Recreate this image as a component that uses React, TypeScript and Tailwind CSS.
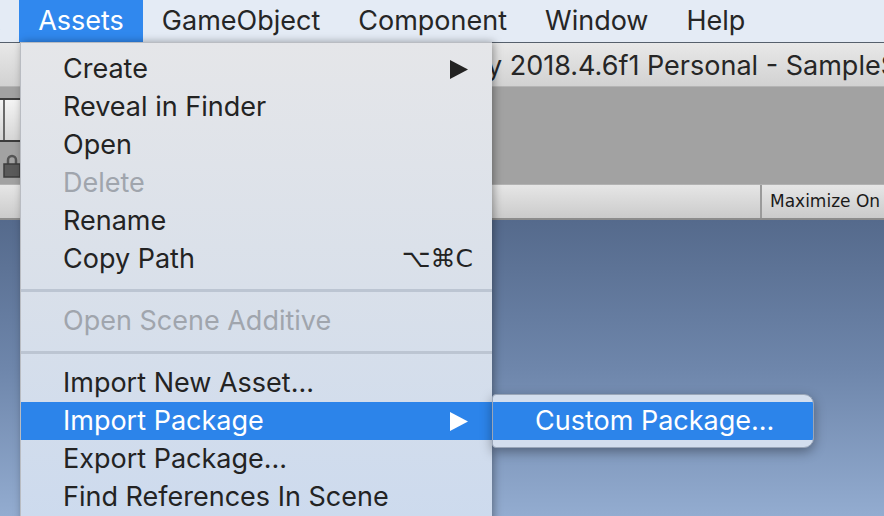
import React from "react"

type Item =
    | { kind: "item", label: string, disabled?: boolean, arrow?: boolean, shortcut?: string, active?: boolean }
    | { kind: "sep" }

const items: Item[] = [
    { kind: "item", label: "Create", arrow: true },
    { kind: "item", label: "Reveal in Finder" },
    { kind: "item", label: "Open" },
    { kind: "item", label: "Delete", disabled: true },
    { kind: "item", label: "Rename" },
    { kind: "item", label: "Copy Path", shortcut: "⌥⌘C" },
    { kind: "sep" },
    { kind: "item", label: "Open Scene Additive", disabled: true },
    { kind: "sep" },
    { kind: "item", label: "Import New Asset..." },
    { kind: "item", label: "Import Package", arrow: true, active: true },
    { kind: "item", label: "Export Package..." },
    { kind: "item", label: "Find References In Scene" },
]

function Arrow({ color }: { color: string }) {
    return <svg width="18" height="19" viewBox="0 0 18 19">
        <path d="M0 0 L18 9.5 L0 19 Z" fill={color} />
    </svg>
}

export default function App() {

    function MenuTitle({ label, active, className }: { label: string, active?: boolean, className?: string }) {
        return <div className={`h-full shrink-0 flex items-center px-[19px] ${active ? "bg-[#3088ee] text-white" : "text-[#262626]"} ${className ?? ""}`}>
            {label}
        </div>
    }

    return <div className="relative w-[884px] h-[516px] overflow-hidden flex flex-col font-['Inter',sans-serif] text-[27px]">
        {/* menu bar */}
        <div className="h-[43px] shrink-0 flex bg-[#e4ebf5] border-b border-[#56606c] whitespace-nowrap">
            <MenuTitle label="Edit" className="ml-[-67px]" />
            <MenuTitle label="Assets" active />
            <MenuTitle label="GameObject" />
            <MenuTitle label="Component" />
            <MenuTitle label="Window" />
            <MenuTitle label="Help" />
        </div>

        {/* window title bar */}
        <div className="h-[44px] shrink-0 flex items-center pt-[3px] bg-gradient-to-b from-[#e8e8e8] to-[#d2d2d2] border-b border-[#b4b4b4] pl-[435px] text-[#262626] whitespace-nowrap">
            Unity 2018.4.6f1 Personal - SampleScene - My project
        </div>

        {/* toolbar */}
        <div className="h-[98px] shrink-0 bg-[#a2a2a2] border-b border-[#b2b2b2] flex flex-col pt-[11px]">
            <div className="w-[60px] h-[44px] flex border-y-2 border-[#3c3c3c] bg-gradient-to-b from-[#f4f4f4] to-[#d6d6d6]">
                <div className="w-[5px] border-r-2 border-[#6a6a6a]"></div>
            </div>
            <div className="flex pl-[2px] pt-[12px]">
                <svg width="20" height="24" viewBox="0 0 20 24">
                    <path d="M6 10 V6 a4 4 0 0 1 8 0 V10" fill="none" stroke="#555" strokeWidth="2.5" />
                    <rect x="2" y="10" width="16" height="13" fill="#5a5a5a" stroke="#3c3c3c" strokeWidth="1.5" />
                </svg>
            </div>
        </div>

        {/* tab bar */}
        <div className="h-[35px] shrink-0 flex bg-gradient-to-b from-[#e6e6e6] to-[#cbcbcb] border-b-2 border-[#8c8c8c]">
            <div className="w-[762px] shrink-0 border-r-2 border-[#9a9a9a]"></div>
            <div className="shrink-0 flex items-center pl-[8px] font-['DejaVu_Sans',sans-serif] text-[17px] text-[#1a1a1a] whitespace-nowrap">
                Maximize On Play
            </div>
        </div>

        {/* scene view */}
        <div className="flex-1 bg-gradient-to-b from-[#556a8c] via-[#6e86ab] to-[#93acd0]"></div>

        {/* dropdown menu */}
        <div className="absolute left-[20px] top-[42px] w-[472px] h-[490px] pt-[7px] border-l border-t border-[#b9bcc2] bg-gradient-to-b from-[#e5e6e9] via-[#d9e0ea] to-[#ccdaee] shadow-[2px_0_8px_rgba(0,0,0,0.35)]">
            {items.map((it, i) => it.kind === "sep"
                ? <div key={i} className="h-[24px] flex items-center">
                    <div className="w-full h-[3px] bg-[#bcc5d2]"></div>
                </div>
                : <div key={i} className={`h-[38px] flex items-center justify-between pl-[42px] ${it.shortcut ? "pr-[19px]" : "pr-[24px]"} ${it.active ? "bg-[#2c84ea] text-white" : it.disabled ? "text-[#a0a5ad]" : "text-[#232323]"}`}>
                    <span>{it.label}</span>
                    {it.arrow && <Arrow color={it.active ? "#ffffff" : "#232323"} />}
                    {it.shortcut && <span className="font-['DejaVu_Sans',sans-serif] text-[25px]">{it.shortcut}</span>}
                </div>
            )}
        </div>

        {/* submenu */}
        <div className="absolute left-[492px] top-[394px] w-[322px] h-[54px] rounded-r-[10px] rounded-l-[4px] bg-[#d3deee] shadow-[0_4px_12px_rgba(0,0,0,0.35)] border border-[#9aa6b8] pt-[7px] overflow-hidden">
            <div className="h-[38px] flex items-center pl-[42px] bg-[#2c84ea] text-white whitespace-nowrap">
                Custom Package...
            </div>
        </div>
    </div>
}
